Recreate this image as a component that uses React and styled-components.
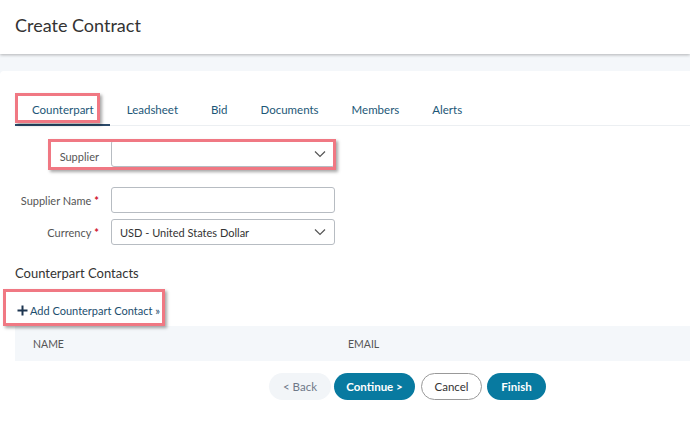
import styled, { createGlobalStyle } from "styled-components";

const GlobalStyle = createGlobalStyle`
  html, body {
    margin: 0;
    padding: 0;
    background: #ffffff;
    font-family: Lato, "Open Sans", sans-serif;
  }
`;

const Page = styled.div`
  width: 690px;
  height: 424px;
  overflow: hidden;
  background: #f4f7fa;
`;

const Header = styled.header`
  height: 54px;
  background: #fff;
  box-shadow: 0 1px 3px rgba(0, 0, 0, 0.28);
  padding: 0 15px;
  display: flex;
  align-items: center;
  margin-bottom: 17px;
  position: relative;
`;

const Title = styled.h1`
  margin: 0 0 4px;
  font-size: 18px;
  font-weight: 400;
  color: #333;
`;

const Panel = styled.main`
  background: #fff;
  border-top-left-radius: 4px;
  padding-top: 24px;
  height: 330px;
`;

const Tabs = styled.nav`
  display: flex;
  margin-left: 15px;
  border-bottom: 1px solid #eceff2;
  height: 30px;
`;

const Tab = styled.div`
  position: relative;
  padding: 0 16px 0 17px;
  display: flex;
  align-items: center;
  font-size: 11.5px;
  color: #1c5777;
  border-bottom: 2px solid ${(p) => (p.$active ? "#2b4b6b" : "transparent")};
  margin-bottom: -1px;
`;

const Mark = styled.div`
  position: absolute;
  border: 3px solid #f07883;
  box-shadow: 2px 2px 3px rgba(0, 0, 0, 0.35);
  pointer-events: none;
  box-sizing: border-box;
  left: ${(p) => p.$l}px;
  top: ${(p) => p.$t}px;
  width: ${(p) => p.$w}px;
  height: ${(p) => p.$h}px;
`;

const Form = styled.div`
  margin: 14px 0 0 15px;
  width: 320px;
`;

const Row = styled.div`
  position: relative;
  display: grid;
  grid-template-columns: 84px 224px;
  column-gap: 12px;
  align-items: center;
  margin-bottom: ${(p) => p.$gap}px;
`;

const Label = styled.label`
  text-align: right;
  font-size: 11px;
  color: #555;
  padding-top: ${(p) => (p.$low ? 6 : 0)}px;
`;

const Star = styled.span`
  color: #d0112b;
  margin-left: 3px;
  font-weight: 700;
`;

const Field = styled.div`
  height: ${(p) => p.$h || 26}px;
  box-sizing: border-box;
  border: 1px solid #b7bcc2;
  border-radius: 3px;
  display: flex;
  align-items: center;
  justify-content: space-between;
  padding: 0 8px 0 8px;
  font-size: 11px;
  color: #333;
  background: #fff;
`;

const Heading = styled.h2`
  margin: 20px 0 0 15px;
  font-size: 13px;
  line-height: 16px;
  font-weight: 400;
  color: #333;
`;

const AddWrap = styled.div`
  position: relative;
  margin: 16px 0 0 17px;
  height: 26px;
  display: flex;
  align-items: center;
`;

const AddLink = styled.a`
  font-size: 11px;
  color: #1c4e6e;
  display: flex;
  align-items: center;
  gap: 2px;
  text-decoration: none;
`;

const TableHead = styled.div`
  margin: 3px 0 0 15px;
  height: 35px;
  background: #f4f7fa;
  display: grid;
  grid-template-columns: 315px 1fr;
  align-items: center;
  padding-left: 18px;
  font-size: 10.5px;
  color: #555;
`;

const Actions = styled.div`
  display: flex;
  align-items: center;
  margin: 12px 0 0 269px;
`;

const Button = styled.button`
  height: 27px;
  border-radius: 14px;
  font-family: Lato, "Open Sans", sans-serif;
  font-size: 11.5px;
  width: ${(p) => p.$w}px;
  margin-right: ${(p) => p.$mr}px;
  padding: 0;
  cursor: pointer;
  ${(p) =>
    p.$kind === "primary" &&
    `background:#087aa0;color:#fff;border:none;font-weight:700;`}
  ${(p) =>
    p.$kind === "ghost" &&
    `background:#f2f5f8;color:#6f7888;border:none;`}
  ${(p) =>
    p.$kind === "outline" &&
    `background:#fff;color:#333;border:1px solid #999;`}
`;

const Chevron = () => (
  <svg width="12" height="8" viewBox="0 0 12 8">
    <polyline points="1,1.5 6,6.5 11,1.5" fill="none" stroke="#555" strokeWidth="1.2" />
  </svg>
);

const Plus = () => (
  <svg width="11" height="11" viewBox="0 0 11 11">
    <path d="M5.5 0.5v10M0.5 5.5h10" stroke="#1d3550" strokeWidth="2" />
  </svg>
);

const tabs = ["Counterpart", "Leadsheet", "Bid", "Documents", "Members", "Alerts"];

export default function App() {
  return (
    <Page>
      <GlobalStyle />
      <Header>
        <Title>Create Contract</Title>
      </Header>
      <Panel>
        <Tabs>
          {tabs.map((t, i) => (
            <Tab key={t} $active={i === 0}>
              {t}
              {i === 0 && <Mark $l={0} $t={-2} $w={85} $h={30} />}
            </Tab>
          ))}
        </Tabs>
        <Form>
          <Row $gap={20}>
            <Label $low>Supplier</Label>
            <Field $h={27}>
              <span />
              <Chevron />
            </Field>
            <Mark $l={33} $t={-1} $w={288} $h={31} />
          </Row>
          <Row $gap={6}>
            <Label>
              Supplier Name<Star>*</Star>
            </Label>
            <Field />
          </Row>
          <Row $gap={0}>
            <Label>
              Currency<Star>*</Star>
            </Label>
            <Field>
              <span>USD - United States Dollar</span>
              <Chevron />
            </Field>
          </Row>
        </Form>
        <Heading>Counterpart Contacts</Heading>
        <AddWrap>
          <AddLink href="#">
            <Plus />
            Add Counterpart Contact »
          </AddLink>
          <Mark $l={-14} $t={-8} $w={162} $h={37} />
        </AddWrap>
        <TableHead>
          <span>NAME</span>
          <span>EMAIL</span>
        </TableHead>
        <Actions>
          <Button $kind="ghost" $w={62} $mr={3}>&lt; Back</Button>
          <Button $kind="primary" $w={81} $mr={6}>Continue &gt;</Button>
          <Button $kind="outline" $w={61} $mr={5}>Cancel</Button>
          <Button $kind="primary" $w={59} $mr={0}>Finish</Button>
        </Actions>
      </Panel>
    </Page>
  );
}
